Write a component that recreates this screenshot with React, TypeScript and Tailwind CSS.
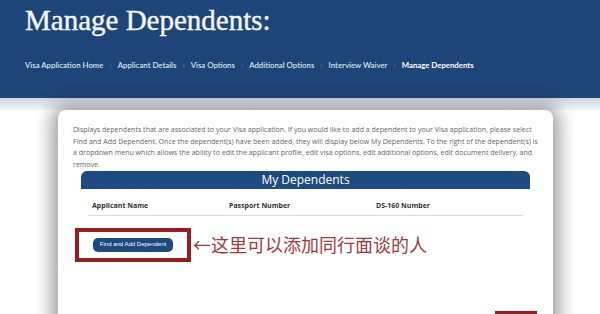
export default function App() {
  const crumbs = [
    'Visa Application Home',
    'Applicant Details',
    'Visa Options',
    'Additional Options',
    'Interview Waiver',
  ];
  return (
    <div className="h-[314px] w-[600px] overflow-hidden bg-white">
      {/* header */}
      <div className="h-[98px] bg-[#1e4577] px-[25px] pt-[2px]">
        <h1 className="font-['Liberation_Serif',serif] text-[29px] leading-[36px] text-[#f3f6fb] [-webkit-text-stroke:0.4px_#f3f6fb]">
          Manage Dependents:
        </h1>
        <div className="mt-[22px] flex items-center font-['Lato',sans-serif] text-[7.8px] font-semibold text-[#d8e3f3]">
          {crumbs.map((c) => (
            <span key={c} className="flex items-center">
              {c}
              <span className="mx-[6px] text-[#5a77a0]">›</span>
            </span>
          ))}
          <span className="font-bold text-white">Manage Dependents</span>
        </div>
      </div>
      <div className="h-[12px] bg-gradient-to-b from-[#cfd5e0] to-[#f4f5f7]" />

      {/* card */}
      <div className="ml-[58px] h-[220px] w-[495px] rounded-t-[8px] bg-white pt-[14px] shadow-[0_2px_18px_6px_rgba(0,0,0,0.4)]">
        <p className="pl-[15px] pr-[13px] font-['Open_Sans',sans-serif] text-[7.05px] leading-[11.5px] text-[#666]">
          Displays dependents that are associated to your Visa application. If you would like to add a dependent to your Visa application, please select Find and Add Dependent. Once the dependent(s) have been added, they will display below My Dependents. To the right of the dependent(s) is a dropdown menu which allows the ability to edit the applicant profile, edit visa options, edit additional options, edit document delivery, and remove.
        </p>

        <div className="ml-[23px] mt-[1px] w-[449px]">
          <div className="flex h-[18px] items-center justify-center rounded-t-[6px] bg-[#1d4a80] font-['Open_Sans',sans-serif] text-[12px] text-white">
            My Dependents
          </div>
          <div className="mx-[7px] mt-[12px] grid grid-cols-[137px_147px_1fr] border-b border-[#ddd] pb-[3px] pl-[4px] font-['Open_Sans',sans-serif] text-[7px] font-bold text-[#333]">
            <span>Applicant Name</span>
            <span>Passport Number</span>
            <span>DS-160 Number</span>
          </div>
        </div>

        <div className="ml-[17px] mt-[12px] flex items-center">
          <div className="flex h-[34px] w-[116px] items-center justify-center border-[4px] border-[#9b1c1f]">
            <button className="h-[14px] rounded-[5px] bg-[#1d4a80] px-[7px] font-['Liberation_Sans',sans-serif] text-[6px] text-white">
              Find and Add Dependent
            </button>
          </div>
          <span className="ml-[2px] font-['Noto_Sans_CJK_SC',sans-serif] text-[18px] text-[#a5383a]">
            ←这里可以添加同行面谈的人
          </span>
        </div>

        <div className="ml-[437px] mt-[49px] h-[10px] w-[42px] border-[3px] border-[#9b1c1f]" />
      </div>
    </div>
  );
}
